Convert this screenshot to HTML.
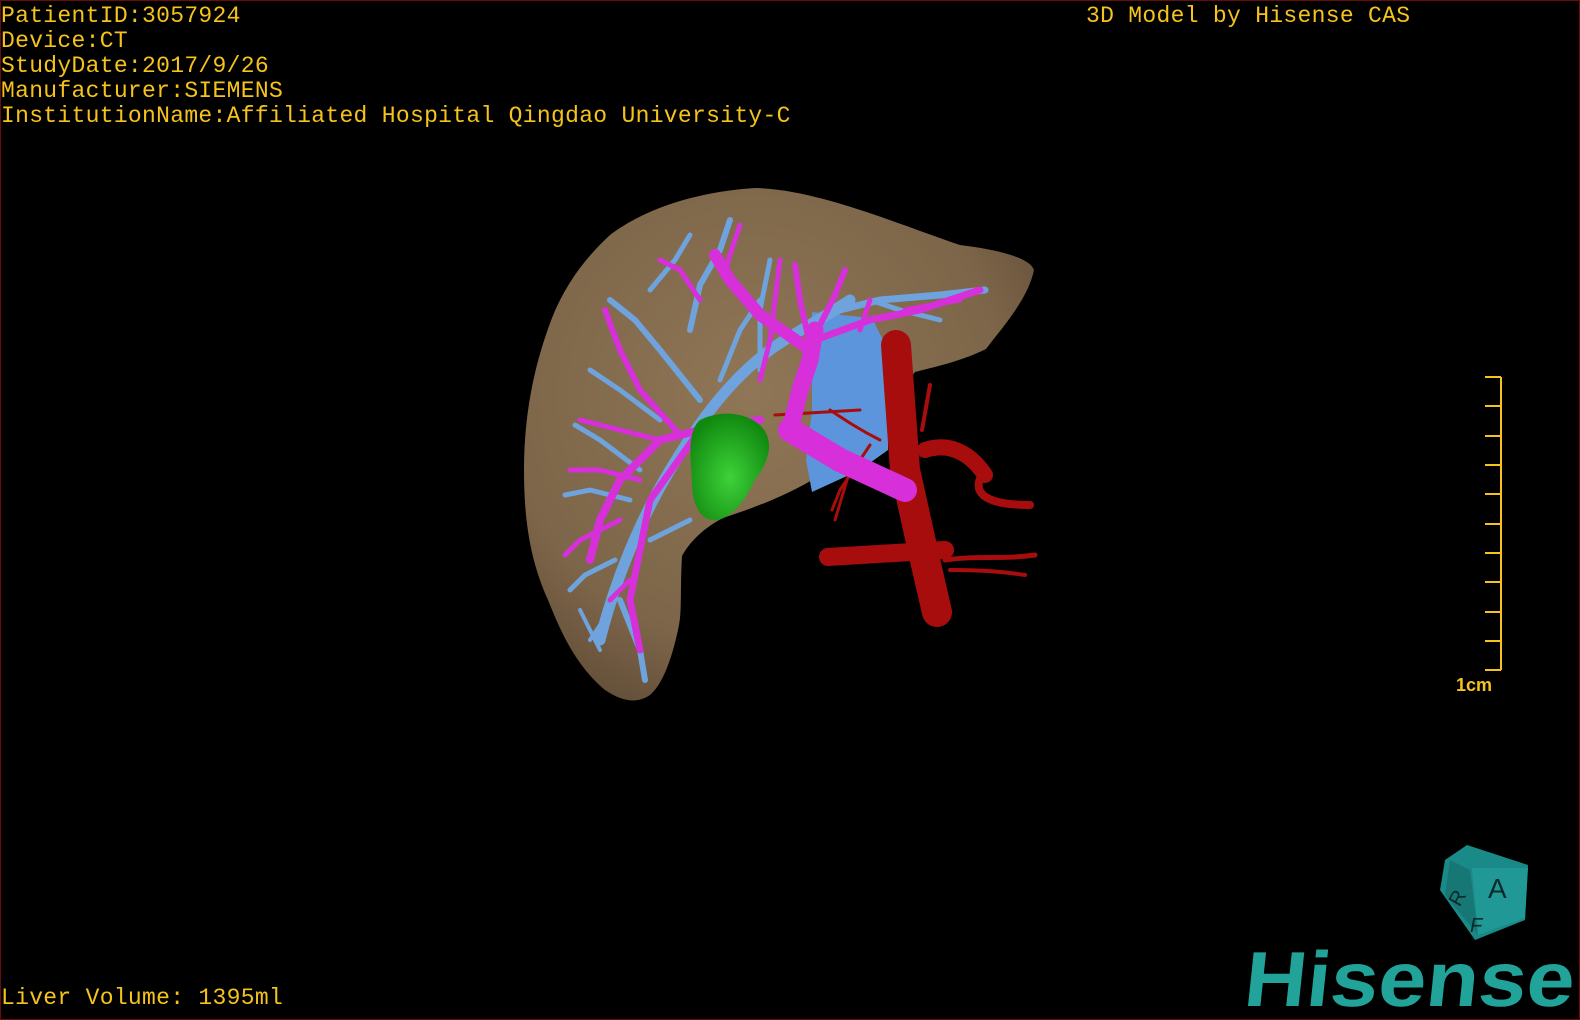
<!DOCTYPE html>
<html><head><meta charset="utf-8"><style>
html,body{margin:0;padding:0;background:#000;}
body{width:1580px;height:1020px;position:relative;overflow:hidden;}
.frame{position:absolute;left:0;top:0;width:1578px;height:1018px;border:1px solid #6a0c0c;}
.t{position:absolute;color:#f5c31c;font-family:"Liberation Mono",monospace;font-size:23px;line-height:25px;white-space:pre;letter-spacing:0.3px;}
svg{position:absolute;left:0;top:0;}
</style></head><body>
<div class="frame"></div>
<svg width="1580" height="1020" viewBox="0 0 1580 1020">
<defs>
<radialGradient id="lv" cx="0.45" cy="0.4" r="0.7"><stop offset="0" stop-color="#8f7656"/><stop offset="0.7" stop-color="#7d6549"/><stop offset="1" stop-color="#5e4a35"/></radialGradient>
<radialGradient id="gr" cx="0.5" cy="0.6" r="0.6"><stop offset="0" stop-color="#3ed23a"/><stop offset="1" stop-color="#11890f"/></radialGradient>
</defs>
<path d="M756,188 C820,190 900,225 960,245 C1000,250 1030,258 1034,270 C1028,300 1000,330 986,349 C960,362 930,368 915,372 L870,430 C850,460 830,470 817,477 C780,500 740,512 723,518 C700,530 688,545 682,556 C680,590 682,610 679,625 C672,660 662,685 650,695 C635,705 620,700 605,690 C575,665 560,630 548,600 C530,560 524,520 524,470 C524,420 532,370 552,318 C565,285 585,258 610,235 C640,212 690,192 756,188 Z" fill="url(#lv)"/>
<path d="M812,312 L872,318 L888,350 L888,450 L860,470 L812,492 L806,460 L812,410 Z" fill="#5c95dc"/>
<g stroke="#a80d0d" fill="none" stroke-linecap="round">
<path d="M896,345 L905,470 L925,560 L937,612" stroke-width="30"/>
<path d="M828,557 L945,550" stroke-width="18"/>
<path d="M925,450 C955,440 975,460 985,475" stroke-width="16"/>
<path d="M985,470 C970,490 980,505 1030,505" stroke-width="8"/>
<path d="M945,560 C980,555 1000,560 1035,555" stroke-width="5"/>
<path d="M950,570 C985,570 1005,572 1025,575" stroke-width="4"/>
<path d="M922,430 L930,385" stroke-width="4"/>
<path d="M880,440 C860,430 845,420 830,410" stroke-width="3"/>
<path d="M870,445 L840,490 L832,510" stroke-width="3"/>
<path d="M860,410 L775,415" stroke-width="3"/>
<path d="M850,470 L835,520" stroke-width="3"/>
</g>
<g stroke="#6fa3de" fill="none" stroke-linecap="round">
<path d="M600,640 C615,580 640,520 670,470 C700,420 730,380 770,350 C790,335 820,320 850,300" stroke-width="11"/>
<path d="M770,350 L840,310 L880,300 L940,295 L985,290" stroke-width="7"/>
<path d="M700,400 L660,350 L635,320 L610,300" stroke-width="6"/>
<path d="M690,330 L700,285 L720,250 L730,220" stroke-width="6"/>
<path d="M650,290 L675,260 L690,235" stroke-width="5"/>
<path d="M640,470 L600,440 L575,425" stroke-width="5"/>
<path d="M630,500 L590,490 L565,495" stroke-width="5"/>
<path d="M615,560 L585,575 L570,590" stroke-width="5"/>
<path d="M620,600 L640,650 L645,680" stroke-width="6"/>
<path d="M610,610 L590,640" stroke-width="4"/>
<path d="M720,380 L740,330 L760,300" stroke-width="5"/>
<path d="M760,370 L760,310 L770,260" stroke-width="5"/>
<path d="M870,300 L900,310 L940,320" stroke-width="5"/>
<path d="M660,420 L620,390 L590,370" stroke-width="5"/>
<path d="M680,450 L720,440 L740,420" stroke-width="5"/>
<path d="M650,540 L690,520" stroke-width="5"/>
<path d="M600,650 L580,610" stroke-width="4"/>
</g>
<g stroke="#d72fd9" fill="none" stroke-linecap="round">
<path d="M905,490 L840,460 L790,430" stroke-width="24"/>
<path d="M790,430 L800,390 L810,360 L815,330" stroke-width="17"/>
<path d="M810,350 L760,315 L730,280 L715,255" stroke-width="12"/>
<path d="M815,340 L870,320 L920,310 L980,290" stroke-width="7"/>
<path d="M810,345 L800,300 L795,265" stroke-width="6"/>
<path d="M815,335 L835,295 L845,270" stroke-width="6"/>
<path d="M760,420 L700,430 L660,440 L620,480 L600,520 L590,560" stroke-width="8"/>
<path d="M700,430 L650,500 L640,550 L630,600 L640,650" stroke-width="7"/>
<path d="M680,435 L640,390 L620,350 L605,310" stroke-width="6"/>
<path d="M660,440 L620,430 L580,420" stroke-width="5"/>
<path d="M640,480 L600,470 L570,470" stroke-width="5"/>
<path d="M620,520 L580,540 L565,555" stroke-width="5"/>
<path d="M700,300 L680,270 L660,260" stroke-width="5"/>
<path d="M725,270 L740,225" stroke-width="5"/>
<path d="M860,330 L870,300" stroke-width="5"/>
<path d="M905,310 L960,300" stroke-width="5"/>
<path d="M630,580 L610,600" stroke-width="5"/>
<path d="M760,380 L770,340 L780,260" stroke-width="5"/>
</g>
<path d="M700,420 C720,410 745,412 760,425 C775,440 770,460 755,480 C745,500 735,515 718,520 C700,522 692,505 692,480 C690,455 688,430 700,420 Z" fill="url(#gr)"/>
<g stroke="#f5c31c" stroke-width="2" fill="none">
<path d="M1501,377 L1501,670"/>
<path d="M1485,377H1501M1485,406H1501M1485,436H1501M1485,465H1501M1485,494H1501M1485,524H1501M1485,553H1501M1485,582H1501M1485,612H1501M1485,641H1501M1485,670H1501"/>
</g>
<text x="1456" y="691" fill="#f5c31c" font-family="Liberation Sans,sans-serif" font-size="18" font-weight="bold">1cm</text>
<g>
<polygon points="1467,845 1528,865 1525,920 1475,940 1440,890 1445,860" fill="#1a8a88"/>
<polygon points="1450,860 1470,870 1478,935 1445,895" fill="#167775"/>
<polygon points="1472,868 1528,868 1525,918 1478,935" fill="#1f9896"/>
<text x="1488" y="898" font-family="Liberation Sans,sans-serif" font-size="28" fill="#0a2a2a">A</text>
<text x="1470" y="932" font-family="Liberation Sans,sans-serif" font-size="20" fill="#0a2a2a" font-style="italic">F</text>
<text x="1450" y="905" font-family="Liberation Sans,sans-serif" font-size="20" fill="#0a2a2a" transform="rotate(-60 1457 898)">R</text>
</g>
<text x="1248" y="1006" font-family="Liberation Sans,sans-serif" font-size="78" font-weight="bold" fill="#21a39a" textLength="330" lengthAdjust="spacingAndGlyphs" transform="skewX(-6) translate(100,0)">Hisense</text>
</svg>
<div class="t" style="left:1px;top:4px;">PatientID:3057924
Device:CT
StudyDate:2017/9/26
Manufacturer:SIEMENS
InstitutionName:Affiliated Hospital Qingdao University-C</div>
<div class="t" style="left:1086px;top:4px;">3D Model by Hisense CAS</div>
<div class="t" style="left:1px;top:986px;">Liver Volume: 1395ml</div>
</body></html>
